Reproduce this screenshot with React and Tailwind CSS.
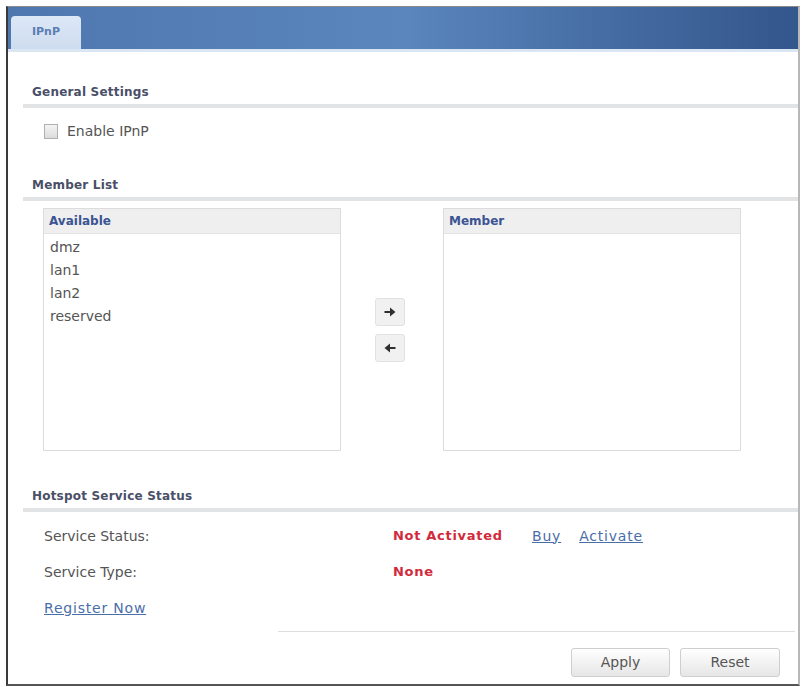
import { useState } from 'react'

const Arrow = ({ dir }) => (
    <svg width="12" height="10" viewBox="0 0 12 10" className={dir === 'left' ? 'rotate-180' : ''}>
        <path d="M0.5 4h6.5v2h-6.5z" fill="#2f2f2f" />
        <path d="M6 0.5l5.5 4.5-5.5 4.5z" fill="#2f2f2f" />
    </svg>
)

const SectionTitle = ({ children }) => (
    <div>
        <div className="pl-[24px] text-[12px] font-bold leading-[16px] tracking-[0.2px] text-[#4a4f68]">{children}</div>
        <div className="ml-[15px] mt-[4px] h-[4px] bg-[#e2e3e5]" />
    </div>
)

const ListBox = ({ title, items }) => (
    <div className="flex h-[243px] w-[298px] flex-col border border-[#dcdcdc] bg-white">
        <div className="flex h-[25px] items-center border-b border-[#e4e4e4] bg-[#efefef] pl-[5px] text-[12px] font-bold text-[#3b5493]">
            {title}
        </div>
        <div className="flex flex-col pt-[2px]">
            {items.map((item) => (
                <div key={item} className="flex h-[23px] items-center pl-[6px] text-[14px] text-[#555]">
                    {item}
                </div>
            ))}
        </div>
    </div>
)

const App = () => {
    const [enabled, setEnabled] = useState(false)
    const available = ['dmz', 'lan1', 'lan2', 'reserved']

    return (
        <div className="min-h-[687px] bg-white pt-[6px] font-['DejaVu_Sans',sans-serif]">
            <div className="mx-[6px] flex h-[680px] flex-col border-x-2 border-t border-b-2 border-t-[#8a8a8a] border-l-[#3a3a3a] border-r-[#b8b8b8] border-b-[#555]">
                <div className="flex h-[42px] items-end bg-gradient-to-r from-[#4e77ae] via-[#5a86bd] to-[#33568c] pl-[3px]">
                    <div className="flex h-[33px] w-[70px] items-center justify-center rounded-t-[4px] bg-gradient-to-b from-[#dde8f6] to-[#cddcef] text-[11px] font-bold text-[#5a7db2]">
                        IPnP
                    </div>
                </div>
                <div className="h-[3px] bg-[#dbe6f3]" />

                <div className="flex flex-1 flex-col">
                    <div className="mt-[32px]">
                        <SectionTitle>General Settings</SectionTitle>
                    </div>
                    <label className="mt-[13px] flex items-center gap-[9px] pl-[36px]">
                        <span
                            onClick={() => setEnabled(!enabled)}
                            className="h-[15px] w-[14px] border border-[#b0b0b0] bg-gradient-to-b from-[#f4f4f4] to-[#dcdcdc]"
                        />
                        <span className="text-[14px] text-[#555]">Enable IPnP</span>
                    </label>

                    <div className="mt-[35px]">
                        <SectionTitle>Member List</SectionTitle>
                    </div>
                    <div className="mt-[7px] flex items-center pl-[35px]">
                        <ListBox title="Available" items={available} />
                        <div className="ml-[34px] mr-[38px] flex flex-col gap-[8px]">
                            <button className="flex h-[28px] w-[30px] items-center justify-center rounded-[3px] border border-[#e2e2e2] bg-[#f1f1f1]">
                                <Arrow dir="right" />
                            </button>
                            <button className="flex h-[28px] w-[30px] items-center justify-center rounded-[3px] border border-[#e2e2e2] bg-[#f1f1f1]">
                                <Arrow dir="left" />
                            </button>
                        </div>
                        <ListBox title="Member" items={[]} />
                    </div>

                    <div className="mt-[37px]">
                        <SectionTitle>Hotspot Service Status</SectionTitle>
                    </div>
                    <div className="mt-[14px] flex flex-col gap-[16px] pl-[36px] text-[14px]">
                        <div className="flex h-[20px] items-center">
                            <span className="w-[349px] text-[#555]">Service Status:</span>
                            <span className="w-[139px] text-[13px] font-bold tracking-[0.7px] text-[#d22a3d]">Not Activated</span>
                            <a className="tracking-[0.8px] text-[#4a6ea8] underline">Buy</a>
                            <a className="ml-[18px] tracking-[0.8px] text-[#4a6ea8] underline">Activate</a>
                        </div>
                        <div className="flex h-[20px] items-center">
                            <span className="w-[349px] text-[#555]">Service Type:</span>
                            <span className="text-[13px] font-bold tracking-[0.7px] text-[#d22a3d]">None</span>
                        </div>
                        <div className="flex h-[20px] items-center">
                            <a className="tracking-[0.8px] text-[#4a6ea8] underline">Register Now</a>
                        </div>
                    </div>

                    <div className="ml-[270px] mr-[3px] mt-[13px] h-px bg-[#dedede]" />
                    <div className="mt-[16px] flex justify-end gap-[10px] pr-[18px]">
                        <button className="h-[29px] w-[99px] rounded-[3px] border border-[#cfcfcf] bg-gradient-to-b from-white to-[#e6e6e6] text-[14px] text-[#555]">
                            Apply
                        </button>
                        <button className="h-[29px] w-[100px] rounded-[3px] border border-[#cfcfcf] bg-gradient-to-b from-white to-[#e6e6e6] text-[14px] text-[#555]">
                            Reset
                        </button>
                    </div>
                </div>
            </div>
        </div>
    )
}

export default App
